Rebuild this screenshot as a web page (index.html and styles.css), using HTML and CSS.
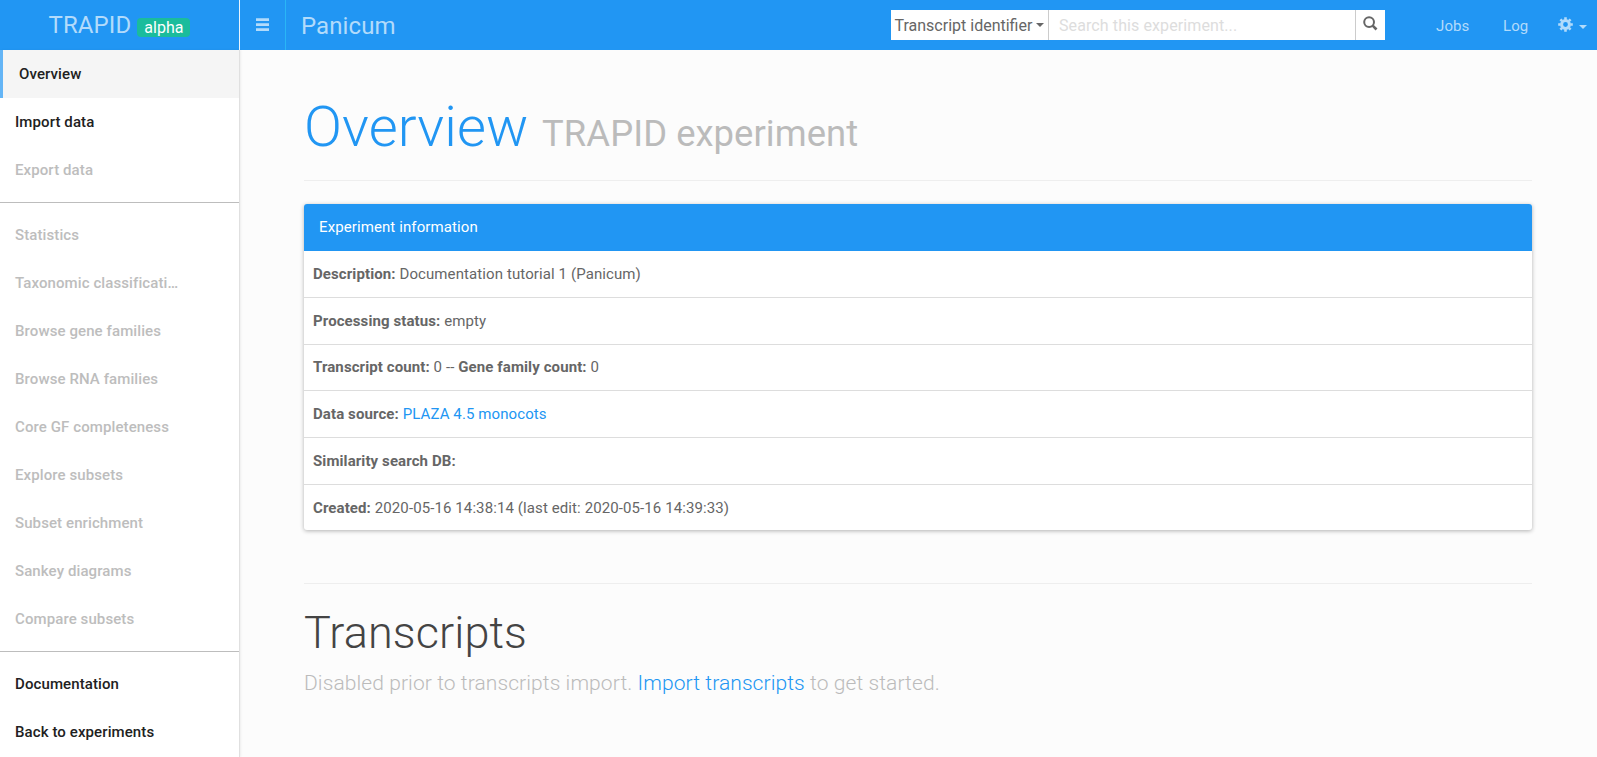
FILE: index.html
```html
<!DOCTYPE html>
<html lang="en">
<head>
<meta charset="utf-8">
<title>TRAPID - Overview</title>
<link rel="stylesheet" href="styles.css">
</head>
<body>
<header class="topbar">
  <a class="brand"><span class="brand-name">TRAPID</span><span class="badge">alpha</span></a>
  <button class="menu-toggle" aria-label="Toggle menu">
    <svg width="13" height="13" viewBox="0 0 13 13" fill="currentColor"><path d="M0 .3h13V3H0zM0 5.3h13V8H0zM0 10.3h13V13H0z"/></svg>
  </button>
  <div class="experiment">Panicum</div>
  <form class="search">
    <div class="search-type">Transcript identifier<span class="caret"></span></div>
    <input class="search-input" type="text" placeholder="Search this experiment...">
    <button class="search-btn" type="button" aria-label="Search">
      <svg width="15" height="15" viewBox="0 0 15 15" fill="none" stroke="currentColor"><circle cx="6.1" cy="6.1" r="4.9" stroke-width="2"/><path d="M9.7 9.7l3.8 3.8" stroke-width="2.6"/></svg>
    </button>
  </form>
  <nav class="top-links">
    <a class="link-jobs">Jobs</a>
    <a class="link-log">Log</a>
    <a class="link-settings">
      <svg width="15" height="15" viewBox="-7.5 -7.5 15 15" fill="none" stroke="currentColor"><circle r="3.9" stroke-width="3"/><path stroke-width="2.6" d="M0-7.3v2.5M0 7.3V4.8M-7.3 0h2.5M7.3 0H4.8M-5.1-5.1l1.8 1.8M5.1 5.1L3.3 3.3M5.1-5.1L3.3-3.3M-5.1 5.1l1.8-1.8"/></svg><span class="caret"></span>
    </a>
  </nav>
</header>
<div class="layout">
  <nav class="sidebar">
    <a class="item active">Overview</a>
    <a class="item">Import data</a>
    <a class="item disabled">Export data</a>
    <hr class="divider">
    <a class="item disabled">Statistics</a>
    <a class="item disabled">Taxonomic classification</a>
    <a class="item disabled">Browse gene families</a>
    <a class="item disabled">Browse RNA families</a>
    <a class="item disabled">Core GF completeness</a>
    <a class="item disabled">Explore subsets</a>
    <a class="item disabled">Subset enrichment</a>
    <a class="item disabled">Sankey diagrams</a>
    <a class="item disabled">Compare subsets</a>
    <hr class="divider">
    <a class="item">Documentation</a>
    <a class="item">Back to experiments</a>
  </nav>
  <main class="content">
    <h1 class="page-title">Overview <small>TRAPID experiment</small></h1>
    <section class="panel">
      <div class="panel-heading">Experiment information</div>
      <div class="row"><strong>Description:</strong> Documentation tutorial 1 (Panicum)</div>
      <div class="row"><strong>Processing status:</strong> empty</div>
      <div class="row counts"><strong>Transcript count:</strong> 0 -- <strong>Gene family count:</strong> 0</div>
      <div class="row"><strong>Data source:</strong> <a>PLAZA 4.5 monocots</a></div>
      <div class="row"><strong>Similarity search DB:</strong></div>
      <div class="row"><strong>Created:</strong> 2020-05-16 14:38:14 (last edit: 2020-05-16 14:39:33)</div>
    </section>
    <section class="transcripts">
      <h2>Transcripts</h2>
      <p class="lead">Disabled prior to transcripts import. <a>Import transcripts</a> to get started.</p>
    </section>
  </main>
</div>
</body>
</html>
```
FILE: styles.css
```css
* { box-sizing: border-box; }
body {
  margin: 0;
  height: 757px;
  overflow: hidden;
  background: #fcfcfc;
  color: #666;
  font: 15px/27.7px Roboto, sans-serif;
  letter-spacing: .1px;
}
.topbar {
  display: flex;
  height: 50px;
  background: #2196f3;
  color: #b2dbfb;
}
.brand {
  display: flex;
  justify-content: center;
  width: 240px;
  border-right: 1px solid #e8f4fe;
  font-size: 24px;
  line-height: 50px;
}
.badge {
  align-self: flex-start;
  margin: 18px 0 0 6px;
  padding: 0 7px;
  height: 19px;
  border-radius: 4px;
  background: #1abc9c;
  color: #fff;
  font-size: 16px;
  line-height: 19px;
  letter-spacing: 0;
}
.menu-toggle {
  display: flex;
  align-items: center;
  justify-content: center;
  width: 46px;
  padding: 0 0 1px;
  border: 0;
  border-right: 1px solid #29b6f6;
  background: none;
  color: inherit;
}
.experiment {
  flex: 1;
  padding-left: 15px;
  font-size: 24px;
  line-height: 52px;
}
.search {
  display: flex;
  width: 494px;
  height: 30px;
  margin-top: 10px;
  background: #fff;
  color: #666;
}
.search-type {
  display: flex;
  align-items: center;
  width: 158px;
  padding: 1px 0 0 3.5px;
  border-right: 1px solid #ccc;
  font-size: 16px;
  letter-spacing: 0;
  white-space: nowrap;
}
.caret {
  border: 4px solid transparent;
  border-top-color: currentColor;
  border-bottom: 0;
}
.search-type .caret { margin: 0 0 1px 4px; }
.search-input {
  flex: 1;
  min-width: 0;
  padding: 1px 10px 0;
  border: 0;
  background: none;
  font: 16px Roboto, sans-serif;
  letter-spacing: .1px;
}
.search-input::placeholder { color: #ddd; opacity: 1; }
.search-btn {
  display: flex;
  align-items: flex-start;
  width: 30px;
  padding: 6px 0 0 7px;
  border: 0;
  border-left: 1px solid #ccc;
  background: none;
  color: #666;
}
.top-links {
  display: flex;
  width: 212px;
  padding-left: 51px;
  line-height: 52px;
}
.link-jobs { width: 67px; }
.link-log { width: 55px; }
.link-settings { display: flex; padding-top: 17px; }
.link-settings .caret { margin: 8px 0 0 6px; align-self: flex-start; }
.layout { display: flex; height: 707px; }
.sidebar {
  width: 240px;
  border-right: 1px solid #e0e0e0;
  background: #fff;
  box-shadow: 1px 0 2px rgba(0, 0, 0, .06);
}
.item {
  display: block;
  height: 48px;
  padding: 0 56px 0 15px;
  overflow: hidden;
  color: #212121;
  font-weight: 500;
  line-height: 48px;
  text-overflow: ellipsis;
  white-space: nowrap;
}
.active {
  padding-left: 16px;
  border-left: 3px solid #64b5f6;
  background: #f5f5f5;
}
.disabled { color: #bdbdbd; }
.divider {
  height: 1px;
  margin: 8px 0;
  border: 0;
  background: #bdbdbd;
}
.content { flex: 1; padding: 46px 65px 0 64px; }
.page-title {
  height: 85px;
  margin: 0 0 23px;
  border-bottom: 1px solid #eee;
  color: #2196f3;
  font-size: 56px;
  font-weight: 300;
  line-height: 62px;
  letter-spacing: .1px;
}
.page-title small {
  color: #bbb;
  font-size: 36.4px;
  font-weight: 400;
  letter-spacing: .06px;
}
.panel {
  height: 326px;
  overflow: hidden;
  border-radius: 3px;
  background: #fff;
  box-shadow: 0 1px 4px rgba(0, 0, 0, .3);
}
.panel-heading {
  height: 47px;
  padding-left: 15px;
  background: #2196f3;
  color: #fff;
  line-height: 46px;
}
.row {
  height: 46.7px;
  padding-left: 9px;
  border-bottom: 1px solid #ddd;
  line-height: 46px;
}
.row.counts { line-height: 44.6px; }
.row:nth-child(3) { height: 47px; }
.row:last-child { border-bottom: 0; }
strong { font-weight: 700; }
.content a { color: #2196f3; }
.transcripts {
  margin-top: 53px;
  padding-top: 24px;
  border-top: 1px solid #eee;
}
h2 {
  margin: 0;
  color: #444;
  font-size: 45px;
  font-weight: 300;
  line-height: 50px;
}
.lead {
  margin: 10px 0 0;
  color: #bbb;
  font-size: 21px;
  font-weight: 300;
  line-height: 30px;
  letter-spacing: .09px;
}
```
